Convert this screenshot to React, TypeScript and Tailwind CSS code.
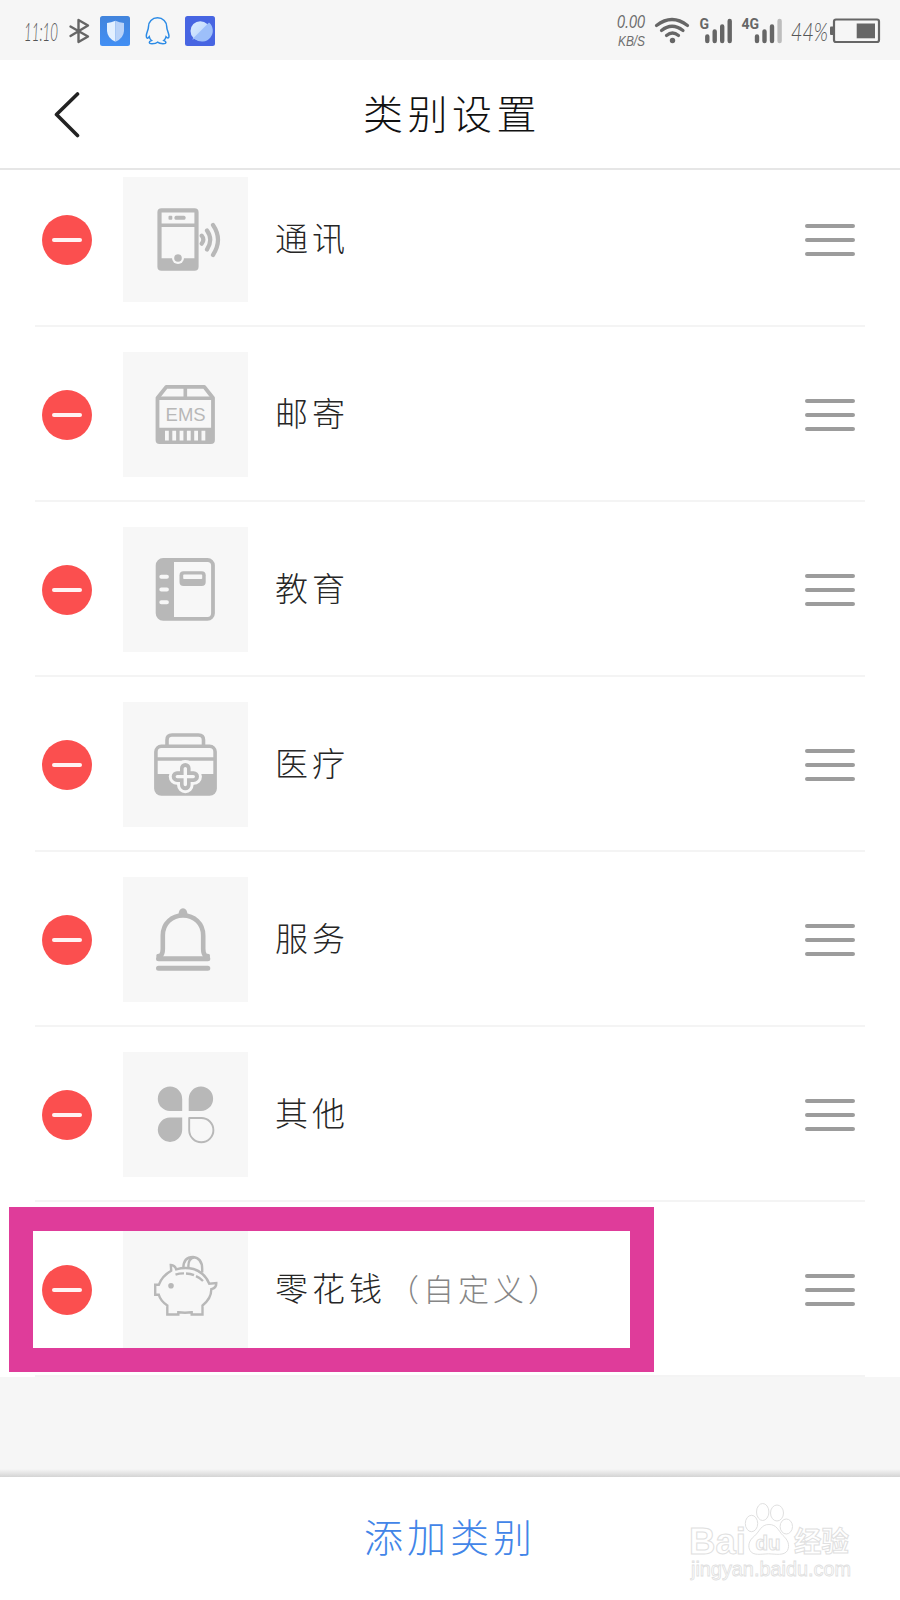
import type { ReactNode } from "react";

const GREY = "#b8b8b8";
const TILE = "#f7f7f7";

const TileIcon = ({ children }: { children: ReactNode }) => (
  <svg viewBox="0 0 125 125" className="h-[125px] w-[125px]" fill="none">
    {children}
  </svg>
);

const PhoneIcon = () => (
  <TileIcon>
    <rect x="36.5" y="33.3" width="37" height="58.4" rx="2" stroke={GREY} strokeWidth="4.2" />
    <path d="M36 48.3H74" stroke={GREY} strokeWidth="3.4" />
    <rect x="45.5" y="38.8" width="3.8" height="4" rx="1" fill={GREY} />
    <rect x="51.5" y="38.8" width="11" height="4" rx="1.5" fill={GREY} />
    <path d="M36 81.3H74V92H36z" fill={GREY} />
    <circle cx="55" cy="81" r="6" fill={TILE} />
    <circle cx="55" cy="81" r="3.8" fill={GREY} />
    <path
      d="M78.7 58.7Q82 62.7 78.7 66.7M84 53.5Q90.5 62.7 84 72.5M90 48Q100 62.7 90 78"
      stroke={GREY}
      strokeWidth="4.2"
      strokeLinecap="round"
    />
  </TileIcon>
);

const ParcelIcon = () => (
  <TileIcon>
    <path
      d="M34.5 88V46L43.3 34.8H81.3L90 46V88Q90 90 88 90H36.5Q34.5 90 34.5 88z"
      stroke={GREY}
      strokeWidth="3.8"
      strokeLinejoin="round"
    />
    <path d="M35 46.3H90M62.3 35V46" stroke={GREY} strokeWidth="3.6" />
    <path d="M35 75.7H90V90H35z" fill={GREY} />
    <path
      d="M43.9 78.8v9.6M51.2 78.8v9.6M58.5 78.8v9.6M65.8 78.8v9.6M73.1 78.8v9.6M80.4 78.8v9.6"
      stroke={TILE}
      strokeWidth="3.8"
    />
    <text
      x="62.6"
      y="68.6"
      textAnchor="middle"
      textLength="40"
      lengthAdjust="spacingAndGlyphs"
      fontSize="18.5"
      fontFamily="Liberation Sans, sans-serif"
      fill={GREY}
    >
      EMS
    </text>
  </TileIcon>
);

const BookIcon = () => (
  <TileIcon>
    <rect x="34.6" y="33" width="55.4" height="58.8" rx="5.5" stroke={GREY} strokeWidth="3.8" />
    <path d="M51 32.5V92.5H40Q34 92.5 34 86.5V38.5Q34 32.5 40 32.5z" fill={GREY} />
    <path
      d="M38.3 49.7h5.600M38.300 62.500h5.600M38.300 75.300h5.600"
      stroke={TILE}
      strokeWidth="4"
      strokeLinecap="round"
    />
    <rect x="56.5" y="44.3" width="26.200" height="14.8" rx="4" fill={GREY} />
    <rect x="60.2" y="47.6" width="19" height="4.5" rx="0.8" fill={TILE} />
  </TileIcon>
);

const MedicalIcon = () => (
  <TileIcon>
    <path d="M44 44V38Q44 33 49 33H75.5Q80.5 33 80.5 38V44" stroke={GREY} strokeWidth="3.6" />
    <rect x="32.900" y="44.3" width="59.200" height="47.7" rx="5.5" stroke={GREY} strokeWidth="3.600" />
    <path d="M33 57H92" stroke={GREY} strokeWidth="3.4" />
    <path d="M33 72H92V86Q92 92 86 92H39Q33 92 33 86z" fill={GREY} />
    <path
      d="M62.3 66.2V83M54 74.6H70.7"
      stroke={TILE}
      strokeWidth="16.5"
      strokeLinecap="round"
    />
    <path
      d="M62.3 66.2V83M54 74.6H70.7"
      stroke={GREY}
      strokeWidth="10.6"
      strokeLinecap="round"
    />
    <path
      d="M62.3 66.6V82.6M54.3 74.6H70.3"
      stroke={TILE}
      strokeWidth="3.4"
      strokeLinecap="round"
    />
  </TileIcon>
);

const BellIcon = () => (
  <TileIcon>
    <path d="M55.5 38Q55.8 31.3 60 31.3T64.5 38z" fill={GREY} />
    <path
      d="M35.5 79H37.5Q39.8 77 39.8 72V58.5C39.8 46 49 38.5 60 38.5S80.2 46 80.2 58.5V72Q80.2 77 82.5 79H84.8"
      stroke={GREY}
      strokeWidth="4.6"
      strokeLinecap="round"
    />
    <path
      d="M35.5 81.7H84.8M35.5 91.3H84.8"
      stroke={GREY}
      strokeWidth="5"
      strokeLinecap="round"
    />
  </TileIcon>
);

const PetalsIcon = () => (
  <TileIcon>
    <path
      d="M59.2 59H46.9A12.2 12.2 0 1 1 59.2 46.900zM65.700 59V46.900A12.200 12.200 0 1 1 78 59zM59.200 65.500V77.700A12.200 12.200 0 1 1 46.900 65.500z"
      fill={GREY}
    />
    <path
      d="M66.2 66H78.2A12.1 12.1 0 1 1 66.2 78.2z"
      stroke={GREY}
      strokeWidth="1.9"
      strokeLinejoin="round"
    />
  </TileIcon>
);

const PiggyIcon = () => (
  <TileIcon>
    <g stroke={GREY} strokeWidth="2.4">
      <path d="M32.2 57.8H35.8Q39 49 48.2 43.7L47.8 38Q52 38.5 53.2 42.3Q62 39.8 70.500 42Q82 45.500 86.300 56.800L93.300 56Q93.500 61 88.300 62.200Q88.500 71.500 79.500 78.500V87.500H68.700V85.300Q62 86.200 55.300 85.300V87.500H44.300V78.500Q37.500 74 35.800 67.800H32.200z" />
      <path d="M60.3 41Q60.5 30 70 30Q79.2 31 79.2 42V45.5M65.5 41Q64.5 31 72 30.3" />
      <path d="M52.5 47.7Q56.5 46.3 61 46.4M63 46.5Q67.5 46.7 71 48.2M73 49.2Q77 51 80 54" />
    </g>
    <circle cx="48" cy="58.8" r="2.8" fill={GREY} />
  </TileIcon>
);

type Category = { name: string; note?: string; icon: ReactNode };

const categories: Category[] = [
  { name: "通讯", icon: <PhoneIcon /> },
  { name: "邮寄", icon: <ParcelIcon /> },
  { name: "教育", icon: <BookIcon /> },
  { name: "医疗", icon: <MedicalIcon /> },
  { name: "服务", icon: <BellIcon /> },
  { name: "其他", icon: <PetalsIcon /> },
  { name: "零花钱", note: "（自定义）", icon: <PiggyIcon /> },
];

const CategoryRow = ({ name, note, icon }: Category) => (
  <li className="mx-[35px] flex h-[175px] items-center border-b-2 border-[#f4f4f4] pt-0.5">
    <button className="ml-[7px] flex h-[50px] w-[50px] shrink-0 items-center justify-center rounded-full bg-[#fb4f4f]">
      <span className="mt-px h-1 w-[30px] rounded-full bg-[#fff3f3]" />
    </button>
    <div className="ml-[31px] shrink-0 bg-[#f7f7f7]">{icon}</div>
    <div className="ml-[27px] flex flex-1 items-baseline pb-1 text-[33px] leading-none font-light tracking-[4px] whitespace-nowrap text-[#262626]">
      <span>{name}</span>
      {note && <span className="ml-0.5 text-[31px] text-[#868686]">{note}</span>}
    </div>
    <div className="mr-2.5 flex w-[50px] flex-col gap-2.5">
      <span className="h-1 rounded-full bg-[#9c9c9c]" />
      <span className="h-1 rounded-full bg-[#9c9c9c]" />
      <span className="h-1 rounded-full bg-[#9c9c9c]" />
    </div>
  </li>
);

const StatusBar = () => (
  <div className="flex h-[60px] items-center justify-between bg-[#f6f6f6] text-[#666]">
    <svg width="230" height="60" viewBox="0 0 230 60" fill="none">
      <defs>
        <linearGradient id="blue" x1="0" y1="0" x2="0" y2="1">
          <stop stopColor="#4284dc" />
          <stop offset="1" stopColor="#428ff4" />
        </linearGradient>
        <linearGradient id="planet" x1="0" y1="0" x2="1" y2="1">
          <stop stopColor="#dcecff" />
          <stop offset="1" stopColor="#b4d2fb" />
        </linearGradient>
      </defs>
      <text
        x="24"
        y="40.5"
        textLength="34"
        lengthAdjust="spacingAndGlyphs"
        fontSize="26"
        fontStyle="italic"
        fontWeight="300"
        fontFamily="Lato, sans-serif"
        fill="#555"
      >
        11:10
      </text>
      <path
        d="M70.500 26.500L88 36.500L78.500 42V20L88 25.500L70.500 36"
        stroke="#666"
        strokeWidth="2.4"
        strokeLinejoin="round"
        strokeLinecap="round"
      />
      <rect x="100" y="16" width="30" height="30" rx="2.5" fill="url(#blue)" />
      <path d="M115.500 20.800Q111 22.800 107 23V31Q107.500 38.500 115.500 41.700z" fill="#e3f0ff" />
      <path d="M115.500 20.800Q119.500 22.800 124 23V31Q123.500 38.500 115.500 41.700z" fill="#b8d2f8" />
      <path
        d="M157.500 17.800C152 17.800 148.500 22 148.500 26.500C148.500 30 146.300 32.500 146.300 36C146.300 39 148 38.500 149.300 36.800C149.700 38.500 150.500 39.800 151.500 40.500C148.500 41.500 148.500 43.700 152 43.700Q156 43.700 157.500 42.200Q159.500 43.700 163 43.700C167 43.700 166.500 41.500 163.800 40.500C165 39.500 165.700 38.300 166 36.800C167.500 38.500 169 38.500 169 36C168.800 32.500 166.700 30 166.700 26.500C166.700 22 163 17.800 157.500 17.800z"
        stroke="#2c8be6"
        strokeWidth="1.5"
      />
      <rect x="185" y="16" width="30" height="30" rx="2.5" fill="#4765e2" />
      <circle cx="200.300" cy="31" r="9.800" fill="url(#planet)" />
      <path d="M192 39.500L209 22.500A10.500 10.500 0 0 1 195 39z" fill="#9dbffa" />
    </svg>
    <svg width="290" height="60" viewBox="610 0 290 60" fill="none">
      <g fontFamily="Liberation Sans, sans-serif" fill="#6e6e6e" fontStyle="italic">
        <text x="617" y="27.5" textLength="28" lengthAdjust="spacingAndGlyphs" fontSize="18">
          0.00
        </text>
        <text x="618" y="45.5" textLength="27" lengthAdjust="spacingAndGlyphs" fontSize="15">
          KB/S
        </text>
      </g>
      <text
        x="791"
        y="40.5"
        textLength="37"
        lengthAdjust="spacingAndGlyphs"
        fontSize="26"
        fontWeight="300"
        fontStyle="italic"
        fontFamily="Lato, sans-serif"
        fill="#555"
      >
        44%
      </text>
      <path
        d="M656.500 25.500Q672 13.500 687.500 25.500M661.500 30.500Q672 22 683 30.500M666.500 35.500Q672.500 30.500 678.500 35.500"
        stroke="#666"
        strokeWidth="3.2"
        strokeLinecap="round"
      />
      <circle cx="672.5" cy="40.5" r="2.7" fill="#666" />
      <g fontFamily="Roboto, sans-serif" fontSize="14" fontWeight="700" fill="#666">
        <text x="699.5" y="29">G</text>
        <text x="741.5" y="29">4G</text>
      </g>
      <g strokeWidth="4.4" strokeLinecap="round" stroke="#666">
        <path d="M707.300 36.500V41M714.700 31.500V41M722.200 26.500V41M729.700 21V41" />
        <path d="M757 36.500V41M764.500 31.500V41M772 26.500V41" />
        <path d="M779.600 21V41" stroke="#bdbdbd" />
      </g>
      <rect x="834" y="19.5" width="45" height="22.500" rx="2" stroke="#666" strokeWidth="2.2" />
      <rect x="830" y="26.5" width="4" height="8.5" rx="1" fill="#666" />
      <rect x="856.7" y="23.5" width="18.3" height="14.8" fill="#666" />
    </svg>
  </div>
);

const Watermark = () => (
  <svg
    className="absolute right-[34px] bottom-0"
    width="190"
    height="110"
    viewBox="676 1490 190 110"
    fill="#fff"
    stroke="#e0e0e0"
  >
    <g fontFamily="Liberation Sans, Noto Sans CJK SC, sans-serif" fontWeight="700">
      <text x="689" y="1553.5" fontSize="37" textLength="57" lengthAdjust="spacingAndGlyphs">
        Bai
      </text>
      <text x="794" y="1551.5" fontSize="28" textLength="55" lengthAdjust="spacingAndGlyphs">
        经验
      </text>
    </g>
    <ellipse cx="751.5" cy="1523.5" rx="6.2" ry="8.2" />
    <ellipse cx="762.7" cy="1512" rx="6.2" ry="8.5" />
    <ellipse cx="777" cy="1513" rx="6.5" ry="8" />
    <ellipse cx="786.3" cy="1526.5" rx="6.2" ry="7.5" />
    <path d="M769 1524.500C761 1524.500 760 1531 754.500 1536C748 1541 748 1547 750 1550.500C753 1556 761 1554 768.500 1553.800C776 1554 784 1556 787.500 1550.500C790 1545 788 1540 783 1535.500C778 1530.500 777 1524.500 769 1524.500z" />
    <text
      x="755.5"
      y="1549.5"
      fontSize="20"
      fontWeight="700"
      textLength="25"
      lengthAdjust="spacingAndGlyphs"
      fontFamily="Liberation Sans, sans-serif"
    >
      du
    </text>
    <text
      x="691"
      y="1575.5"
      fontSize="20"
      textLength="160"
      lengthAdjust="spacingAndGlyphs"
      strokeWidth="0.8"
      fontFamily="Liberation Sans, sans-serif"
    >
      jingyan.baidu.com
    </text>
  </svg>
);

const App = () => {
  return (
    <div className="relative flex h-[1600px] w-[900px] flex-col overflow-hidden bg-[#f6f6f6] font-['Noto_Sans_CJK_SC',sans-serif]">
      <StatusBar />
      <header className="flex h-[110px] shrink-0 items-center border-b-2 border-[#e6e6e6] bg-white">
        <button className="ml-[53px] w-[27px] pt-0.5">
          <svg width="27" height="46" viewBox="0 0 27 46" fill="none">
            <path
              d="M24.5 2L3.500 22.500L24.500 43.500"
              stroke="#222"
              strokeWidth="3.6"
              strokeLinecap="round"
              strokeLinejoin="round"
            />
          </svg>
        </button>
        <h1 className="ml-[283px] pb-1 text-[40px] leading-none font-light tracking-[4.500px] text-[#111]">
          类别设置
        </h1>
      </header>

      <main className="h-[1207px] shrink-0 overflow-hidden bg-white">
        <ul className="-mt-[18px]">
          {categories.map((category) => (
            <CategoryRow key={category.name} {...category} />
          ))}
        </ul>
      </main>

      {/* highlight frame drawn over the custom category */}
      <div className="absolute top-[1207px] left-[9px] h-[165px] w-[645px] border-24 border-[#df3c9a]" />

      <div className="flex flex-1 flex-col justify-end">
        <div className="h-2 bg-linear-to-b from-[#f6f6f6] to-[#d4d4d4]" />
      </div>

      <footer className="relative flex h-[123px] shrink-0 items-center bg-white">
        <button className="ml-[364px] pb-1.5 text-[39px] leading-none font-light tracking-[4px] text-[#4285e8]">
          添加类别
        </button>
        <Watermark />
      </footer>
    </div>
  );
};
export default App;
